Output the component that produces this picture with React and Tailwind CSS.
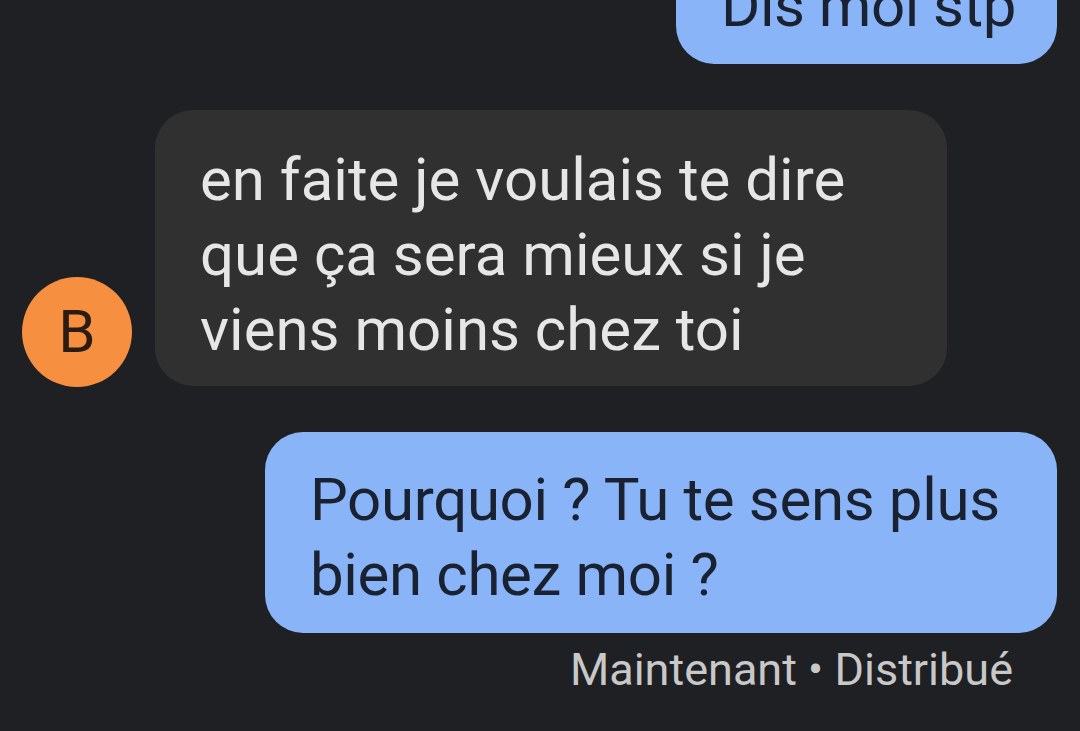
export default function App() {
  return (
    <div className="w-[1080px] h-[731px] overflow-hidden bg-[#1f2023] flex flex-col items-stretch" style={{ fontFamily: "Roboto, 'Liberation Sans', sans-serif" }}>
      <div className="flex justify-end pr-[23px] mt-[-62px]">
        <div className="w-[381px] bg-[#8ab4f8] rounded-[38px] pl-[45px] pt-[30px] pb-[21px] text-[60px] leading-[75px] tracking-[-0.5px] text-[#1a2232]">
          Dis moi stp
        </div>
      </div>
      <div className="flex items-end mt-[46px] pl-[22px]">
        <div className="w-[110px] h-[110px] rounded-full bg-[#f68f3f] flex items-center justify-center text-[60px] leading-none text-[#2a1c12] shrink-0 mb-[-1px]">
          B
        </div>
        <div className="ml-[23px] w-[792px] bg-[#303030] rounded-[38px] pl-[45px] pt-[32px] pb-[19px] text-[60px] leading-[75px] text-[#e6e6e6]">
          en faite je voulais te dire<br />que ça sera mieux si je<br />viens moins chez toi
        </div>
      </div>
      <div className="flex justify-end pr-[23px] mt-[46px]">
        <div className="w-[792px] bg-[#8ab4f8] rounded-[38px] pl-[45px] pt-[30px] pb-[21px] text-[60px] leading-[75px] tracking-[-0.35px] text-[#1a2232]">
          Pourquoi ? Tu te sens plus<br />bien chez moi ?
        </div>
      </div>
      <div className="flex justify-end pr-[67px] mt-[12px] text-[45px] leading-[50px] text-[#c8c8c8]">
        Maintenant • Distribué
      </div>
    </div>
  );
}
